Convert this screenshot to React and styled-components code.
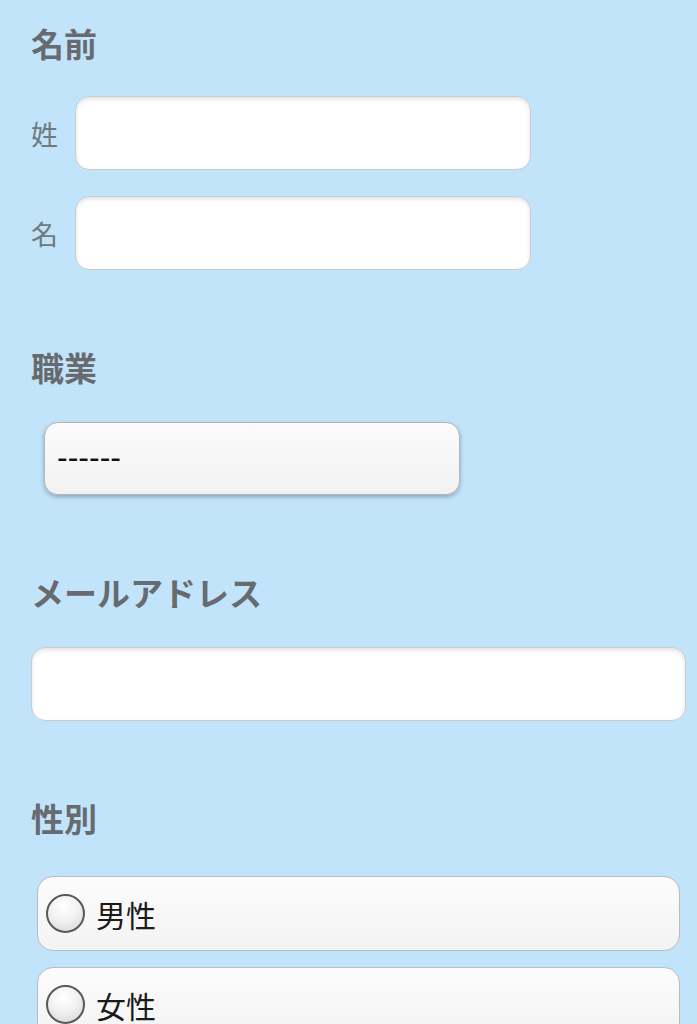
import React from 'react';
import styled, { createGlobalStyle } from 'styled-components';

const GlobalStyle = createGlobalStyle`
    html, body {
        margin: 0;
        padding: 0;
        background: #c2e4fb;
    }
    body {
        font-family: "Noto Sans CJK JP", "Noto Sans", sans-serif;
    }
`;

const Page = styled.form`
    padding: 23px 11px 0 31px;
    display: flex;
    flex-direction: column;
    gap: 77px;
`;

const Section = styled.section`
    display: flex;
    flex-direction: column;
`;

const Heading = styled.h2`
    margin: 0 0 ${props => props.space || 33}px;
    height: 40px;
    line-height: 40px;
    font-size: 33px;
    font-weight: 700;
    color: #676b6f;
`;

const Rows = styled.div`
    display: flex;
    flex-direction: column;
    gap: 26px;
`;

const Row = styled.label`
    display: flex;
    align-items: center;
`;

const RowLabel = styled.span`
    width: 44px;
    font-size: 27px;
    color: #707a80;
    line-height: 1;
`;

const TextInput = styled.input`
    box-sizing: border-box;
    width: ${props => props.width}px;
    height: 74px;
    border: 1px solid #c6ccd0;
    border-radius: 14px;
    background: #fff;
    box-shadow: inset 0 2px 4px rgba(0, 0, 0, 0.12);
    font-size: 24px;
    padding: 0 14px;
    outline: none;
`;

const Select = styled.div`
    box-sizing: border-box;
    margin-left: 13px;
    width: 416px;
    height: 73px;
    border: 1px solid #b4b6b8;
    border-radius: 14px;
    background: linear-gradient(#fbfbfb, #f2f2f2);
    box-shadow: 0 2px 4px rgba(0, 0, 0, 0.28);
    display: flex;
    align-items: center;
    padding-left: 12px;
    font-family: "Liberation Sans", Arial, sans-serif;
    font-size: 32px;
    color: #111;
    padding-bottom: 2px;
`;

const Options = styled.div`
    display: flex;
    flex-direction: column;
    gap: 16px;
    margin-left: 6px;
`;

const Option = styled.label`
    box-sizing: border-box;
    width: 643px;
    height: 75px;
    border: 1px solid #b8bcbf;
    border-radius: 16px;
    background: linear-gradient(#fcfcfc, #f3f3f3);
    display: flex;
    align-items: center;
    padding-left: 8px;
    gap: 11px;
`;

const Radio = styled.span`
    box-sizing: border-box;
    width: 39px;
    height: 39px;
    border-radius: 50%;
    border: 2px solid #595959;
    background: radial-gradient(circle at 45% 30%, #ffffff 0%, #f2f2f2 45%, #d2d2d2 100%);
`;

const OptionText = styled.span`
    font-size: 30px;
    color: #1a1a1a;
    line-height: 1;
`;

const App = () => {
    return (
        <>
            <GlobalStyle />
            <Page>
                <Section>
                    <Heading space={33}>名前</Heading>
                    <Rows>
                        <Row>
                            <RowLabel>姓</RowLabel>
                            <TextInput width={456} />
                        </Row>
                        <Row>
                            <RowLabel>名</RowLabel>
                            <TextInput width={456} />
                        </Row>
                    </Rows>
                </Section>
                <Section>
                    <Heading space={35}>職業</Heading>
                    <Select>------</Select>
                </Section>
                <Section>
                    <Heading space={35}>メールアドレス</Heading>
                    <TextInput width={655} />
                </Section>
                <Section>
                    <Heading space={38}>性別</Heading>
                    <Options>
                        <Option>
                            <Radio />
                            <OptionText>男性</OptionText>
                        </Option>
                        <Option>
                            <Radio />
                            <OptionText>女性</OptionText>
                        </Option>
                    </Options>
                </Section>
            </Page>
        </>
    );
};

export default App;
